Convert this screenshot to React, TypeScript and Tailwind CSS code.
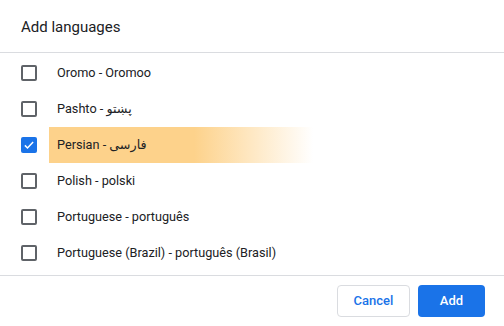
import { useState } from "react";

const languages = [
  { id: "om", label: "Oromo - Oromoo" },
  { id: "ps", label: "Pashto - پښتو" },
  { id: "fa", label: "Persian - فارسی" },
  { id: "pl", label: "Polish - polski" },
  { id: "pt", label: "Portuguese - português" },
  { id: "pt-BR", label: "Portuguese (Brazil) - português (Brasil)" },
];

const Checkbox = ({ checked }: { checked: boolean }) =>
  checked ? (
    <span className="flex h-4 w-4 items-center justify-center rounded-[2px] bg-[#1a73e8]">
      <svg viewBox="0 0 16 16" className="h-3 w-3" fill="none">
        <path
          d="M2.5 8.5l3.5 3.5 7.5-8"
          stroke="white"
          strokeWidth="2"
        />
      </svg>
    </span>
  ) : (
    <span className="h-4 w-4 rounded-[2px] border-2 border-[#5f6368]" />
  );

const App = () => {
  const [selected, setSelected] = useState<string[]>(["fa"]);

  const toggle = (id: string) =>
    setSelected((s) =>
      s.includes(id) ? s.filter((x) => x !== id) : [...s, id]
    );

  return (
    <div className="flex h-[326px] w-[504px] flex-col bg-white font-['Roboto','DejaVu_Sans',sans-serif] text-[#202124]">
      {/* HEADER */}
      <div className="flex h-[53px] items-center border-b border-[#dadce0] px-[21px] pt-[2px] text-[15px]">
        Add languages
      </div>

      {/* LANGUAGE LIST */}
      <div className="flex flex-col pt-[2px] pb-1">
        {languages.map((lang) => {
          const checked = selected.includes(lang.id);
          const highlight = lang.id === "fa";
          return (
            <label
              key={lang.id}
              onClick={() => toggle(lang.id)}
              className="flex h-9 cursor-pointer items-center pl-[21px]"
            >
              <Checkbox checked={checked} />
              <span
                className={`ml-3 flex h-9 items-center pl-2 pr-24 text-[12.7px] ${
                  highlight
                    ? "w-[264px] bg-[linear-gradient(to_right,#fdd28b_0%,#fdd28b_55%,#ffffff_100%)]"
                    : ""
                }`}
              >
                {lang.label}
              </span>
            </label>
          );
        })}
      </div>

      {/* FOOTER */}
      <div className="flex flex-1 items-start justify-end gap-2 border-t border-[#dadce0] pt-[9px] pr-[19px]">
        <button className="h-8 w-[73px] rounded border border-[#dadce0] bg-white text-[13px] font-medium text-[#1a73e8]">
          Cancel
        </button>
        <button className="h-8 w-[67px] rounded bg-[#1a73e8] text-[13px] font-medium text-white">
          Add
        </button>
      </div>
    </div>
  );
};

export default App;
